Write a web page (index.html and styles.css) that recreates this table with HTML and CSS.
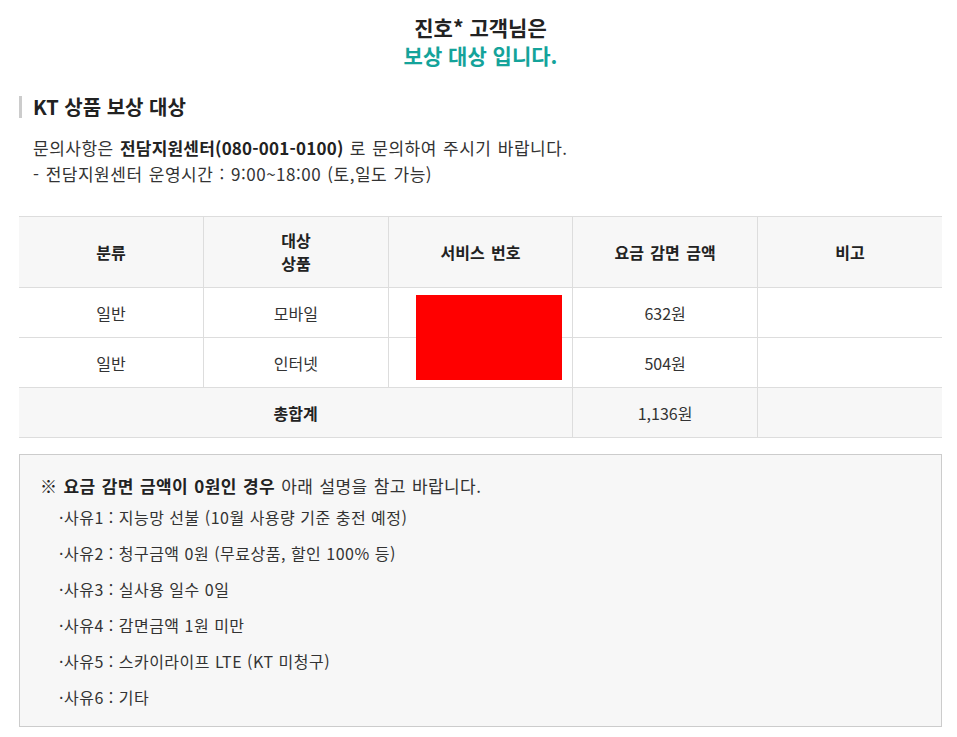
FILE: index.html
```html
<!DOCTYPE html>
<html lang="ko">
<head>
  <meta charset="UTF-8">
  <meta name="viewport" content="width=device-width, initial-scale=1.0">
  <title>KT 상품 보상 대상</title>
  <link rel="stylesheet" href="styles.css">
</head>
<body>
  <div class="page">
    <div class="result-title">
      <p class="name">진호* 고객님은</p>
      <p class="status">보상 대상 입니다.</p>
    </div>

    <h2 class="section-title">KT 상품 보상 대상</h2>
    <div class="guide">
      <p>문의사항은 <strong>전담지원센터(080-001-0100)</strong> 로 문의하여 주시기 바랍니다.</p>
      <p>- 전담지원센터 운영시간 : 9:00~18:00 (토,일도 가능)</p>
    </div>

    <div class="table-wrap">
      <table class="comp-table">
        <thead>
          <tr>
            <th>분류</th>
            <th><span class="two-line">대상<br>상품</span></th>
            <th>서비스 번호</th>
            <th>요금 감면 금액</th>
            <th>비고</th>
          </tr>
        </thead>
        <tbody>
          <tr>
            <td>일반</td>
            <td>모바일</td>
            <td></td>
            <td>632원</td>
            <td></td>
          </tr>
          <tr>
            <td>일반</td>
            <td>인터넷</td>
            <td></td>
            <td>504원</td>
            <td></td>
          </tr>
          <tr class="total">
            <th colspan="3">총합계</th>
            <td>1,136원</td>
            <td></td>
          </tr>
        </tbody>
      </table>
      <div class="mask"></div>
    </div>

    <div class="notice">
      <p class="notice-head"><strong>※ 요금 감면 금액이 0원인 경우</strong> 아래 설명을 참고 바랍니다.</p>
      <ul class="reason-list">
        <li>·사유1 : 지능망 선불 (10월 사용량 기준 충전 예정)</li>
        <li>·사유2 : 청구금액 0원 (무료상품, 할인 100% 등)</li>
        <li>·사유3 : 실사용 일수 0일</li>
        <li>·사유4 : 감면금액 1원 미만</li>
        <li>·사유5 : 스카이라이프 LTE (KT 미청구)</li>
        <li>·사유6 : 기타</li>
      </ul>
    </div>
  </div>
</body>
</html>
```

FILE: styles.css
```css
* {
  margin: 0;
  padding: 0;
  box-sizing: border-box;
  font-family: 'Noto Sans CJK KR', 'Noto Sans', sans-serif;
}

body {
  background: #fff;
  color: #333;
  font-size: 16px;
}

.page {
  width: 923px;
  margin-left: 19px;
}

.result-title {
  padding-top: 13px;
  text-align: center;
  font-size: 21px;
  font-weight: 700;
  line-height: 28px;
}

.result-title .name {
  color: #222;
}

.result-title .status {
  color: #14a39a;
}

.section-title {
  margin-top: 27px;
  padding-left: 11px;
  border-left: 3px solid #ccc;
  font-size: 20px;
  font-weight: 700;
  line-height: 22px;
  color: #222;
}

.guide {
  margin-top: 17px;
  padding-left: 14px;
  font-size: 17px;
  line-height: 26px;
  letter-spacing: 0.5px;
  word-spacing: 1px;
}

.guide strong {
  color: #222;
  letter-spacing: 0.2px;
}

.table-wrap {
  position: relative;
  margin-top: 29px;
}

.comp-table {
  width: 100%;
  border-collapse: collapse;
  table-layout: fixed;
  text-align: center;
}

.comp-table th,
.comp-table td {
  border: 1px solid #ddd;
  height: 50px;
  font-size: 16px;
}

.comp-table tr > :first-child {
  border-left: none;
}

.comp-table tr > :last-child {
  border-right: none;
}

.comp-table thead th {
  height: 71px;
  background: #f7f7f7;
  font-weight: 700;
  color: #222;
  line-height: 22px;
  word-spacing: 2px;
}

.two-line {
  display: inline-block;
  line-height: 23px;
}

.comp-table td {
  font-weight: 400;
  color: #333;
}

.comp-table .total th,
.comp-table .total td {
  background: #f7f7f7;
}

.comp-table .total th {
  font-weight: 700;
  color: #222;
}

.mask {
  position: absolute;
  top: 79px;
  left: 397px;
  width: 146px;
  height: 85px;
  background: #f00;
}

.notice {
  margin-top: 16px;
  padding: 18px 20px 11px;
  background: #f7f7f7;
  border: 1px solid #ccc;
}

.notice-head {
  font-size: 17px;
  line-height: 26px;
  letter-spacing: 0.4px;
  word-spacing: 1px;
}

.notice-head strong {
  color: #222;
}

.reason-list {
  list-style: none;
  padding-left: 19px;
}

.reason-list li {
  line-height: 36px;
  letter-spacing: 0.5px;
}
```
